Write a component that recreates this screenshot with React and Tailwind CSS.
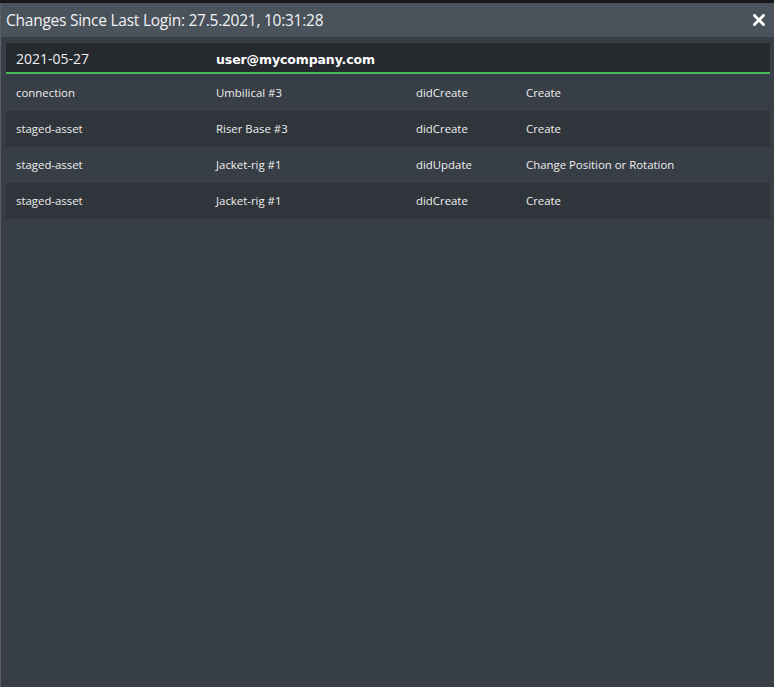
import React from 'react';

const rows = [
  { type: 'connection', name: 'Umbilical #3', event: 'didCreate', action: 'Create' },
  { type: 'staged-asset', name: 'Riser Base #3', event: 'didCreate', action: 'Create' },
  { type: 'staged-asset', name: 'Jacket-rig #1', event: 'didUpdate', action: 'Change Position or Rotation' },
  { type: 'staged-asset', name: 'Jacket-rig #1', event: 'didCreate', action: 'Create' },
];

const CloseIcon = () => (
  <svg width="12" height="12" viewBox="0 0 12 12">
    <path d="M1.5 1.5 L10.5 10.5 M10.5 1.5 L1.5 10.5" stroke="#fff" strokeWidth="2.8" strokeLinecap="square" />
  </svg>
);

const App = () => {
  return (
    <div className="w-[774px] h-[687px] bg-[#16181b] pt-[3px] flex flex-col font-['Open_Sans',sans-serif] overflow-hidden">
      <div className="flex-1 flex flex-col bg-[#383e46] border-l border-[#5a5f66]">
        <div className="h-[34px] bg-[#4a535c] flex items-center justify-between pl-[5px] pr-[8px]">
          <h1 className="text-[15.5px] text-[#f2f2f2] tracking-[-0.25px] pt-[1px]">Changes Since Last Login: 27.5.2021, 10:31:28</h1>
          <button className="text-white mr-[1px]">
            <CloseIcon />
          </button>
        </div>

        <div className="pt-[6px] pl-[5px] pr-[4px] flex flex-col">
          <div className="h-[31px] bg-[#262a2f] border-b-2 border-[#4cbb5c] flex items-center pl-[10px]">
            <span className="w-[200px] text-[14px] text-[#eeeeee] pt-[1px]">2021-05-27</span>
            <span className="text-[12.5px] font-bold text-white font-['DejaVu_Sans',sans-serif] pt-[5px] tracking-[-0.1px]">user@mycompany.com</span>
          </div>

          <div className="mt-[1px] flex flex-col">
            {rows.map((row, i) => (
              <div
                key={i}
                className={`h-[36px] flex items-center pl-[10px] text-[11.4px] text-[#eeeeee] ${i % 2 === 1 ? 'bg-[#30353b]' : 'bg-[#383e46]'}`}
              >
                <span className="w-[200px]">{row.type}</span>
                <span className="w-[200px]">{row.name}</span>
                <span className="w-[110px]">{row.event}</span>
                <span>{row.action}</span>
              </div>
            ))}
          </div>
        </div>
      </div>
    </div>
  );
};

export default App;
